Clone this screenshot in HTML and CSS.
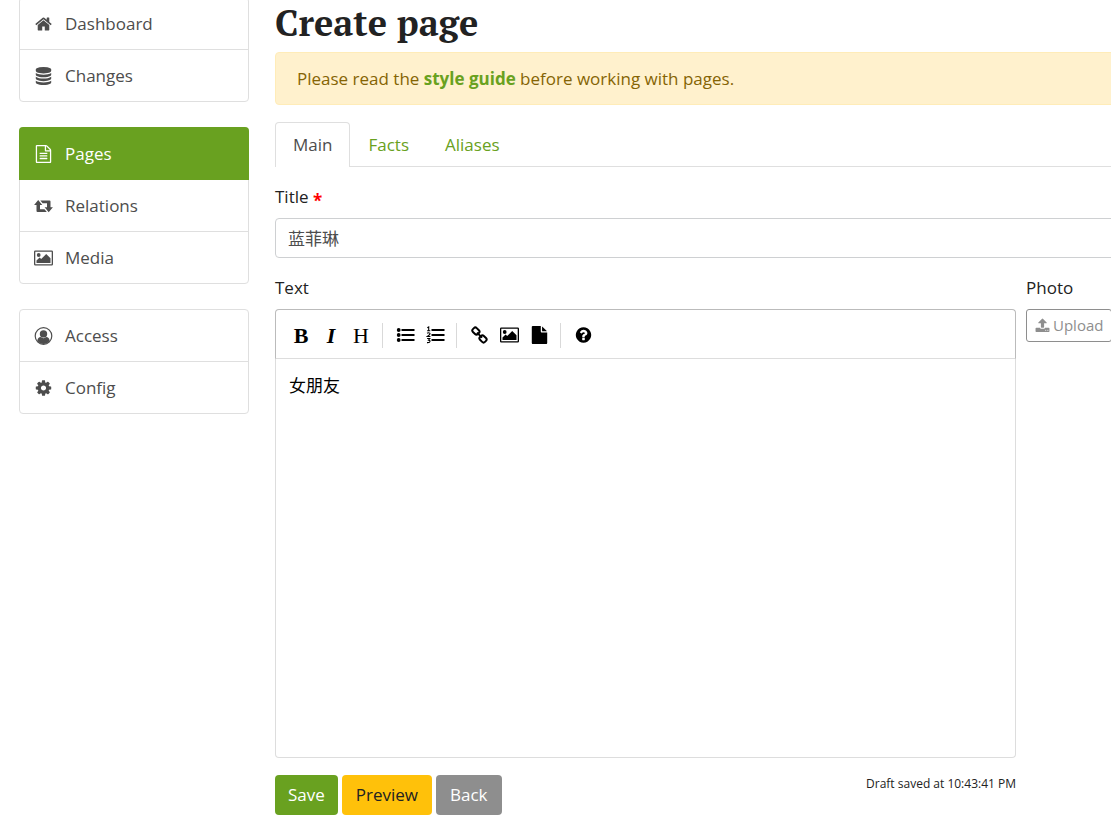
FILE: index.html
```
<!DOCTYPE html>
<html lang="en">
<head>
    <meta charset="UTF-8">
    <meta name="viewport" content="width=device-width, initial-scale=1.0">
    <title>Create page</title>
    <link rel="stylesheet" href="styles.css">
</head>
<body>
    <svg class="sprite" aria-hidden="true">
        <symbol id="image" viewBox="0 0 19 17">
            <path fill-rule="evenodd" d="M1.3 1H17.7Q19 1 19 2.300V14.700Q19 16 17.700 16H1.300Q0 16 0 14.700V2.300Q0 1 1.300 1zM1.300 2.200V14.800H17.700V2.200z"/>
            <circle cx="4.700" cy="5.500" r="1.900"/>
            <path d="M2.500 13.500V11L5.600 8L7.200 9.500L12.200 4.500L16.500 8.800V13.500z"/>
        </symbol>
    </svg>

    <div class="container">
        <nav class="sidebar">
            <div class="list-group">
                <a href="#">
                    <svg class="icon" viewBox="0 0 1792 1792"><path d="M1472 992v480q0 26-19 45t-45 19h-384v-384h-256v384h-384q-26 0-45-19t-19-45v-480q0-1 .5-3t.5-3l575-474 575 474q1 2 1 6zm223-69l-62 74q-8 9-21 11h-3q-13 0-21-7l-692-577-692 577q-12 8-24 7-13-2-21-11l-62-74q-8-10-7-23.5t11-21.500l719-599q32-26 76-26t76 26l244 204v-195q0-14 9-23t23-9h192q14 0 23 9t9 23v408l219 182q10 8 11 21.500t-7 23.500z"/></svg>
                    Dashboard
                </a>
                <a href="#">
                    <svg class="icon" viewBox="0 0 1792 1792"><path d="M896 768q237 0 443-43t325-127v170q0 69-103 128t-280 93.500-385 34.500-385-34.500-280-93.500-103-128v-170q119 84 325 127t443 43zm0 768q237 0 443-43t325-127v170q0 69-103 128t-280 93.500-385 34.500-385-34.500-280-93.500-103-128v-170q119 84 325 127t443 43zm0-384q237 0 443-43t325-127v170q0 69-103 128t-280 93.500-385 34.500-385-34.500-280-93.500-103-128v-170q119 84 325 127t443 43zm0-1152q208 0 385 34.500t280 93.500 103 128v128q0 69-103 128t-280 93.500-385 34.500-385-34.500-280-93.500-103-128v-128q0-69 103-128t280-93.500 385-34.500z"/></svg>
                    Changes
                </a>
            </div>
            <div class="list-group">
                <a href="#" class="active">
                    <svg class="icon" viewBox="0 0 1792 1792"><path d="M1596 380q28 28 48 76t20 88v1152q0 40-28 68t-68 28h-1344q-40 0-68-28t-28-68v-1600q0-40 28-68t68-28h896q40 0 88 20t76 48zm-444-244v376h376q-10-29-22-41l-313-313q-12-12-41-22zm384 1528v-1024h-416q-40 0-68-28t-28-68v-416h-768v1536h1280zm-1024-864q0-14 9-23t23-9h704q14 0 23 9t9 23v64q0 14-9 23t-23 9h-704q-14 0-23-9t-9-23v-64zm736 224q14 0 23 9t9 23v64q0 14-9 23t-23 9h-704q-14 0-23-9t-9-23v-64q0-14 9-23t23-9h704zm0 256q14 0 23 9t9 23v64q0 14-9 23t-23 9h-704q-14 0-23-9t-9-23v-64q0-14 9-23t23-9h704z"/></svg>
                    Pages
                </a>
                <a href="#">
                    <svg class="icon" viewBox="0 0 19 17"><path d="M4.200 2.500L8.300 7.500H6V11.800H10.500L12.800 14.500H3.600Q2.500 14.500 2.500 13.500V7.500H.1zM6.300 3H15.500Q16.500 3 16.500 4V9.700H18.900L14.700 14.800L10.600 9.700H13V5.700H8.600z"/></svg>
                    Relations
                </a>
                <a href="#">
                    <svg class="icon"><use href="#image"/></svg>
                    Media
                </a>
            </div>
            <div class="list-group">
                <a href="#">
                    <svg class="icon" viewBox="0 0 18 18"><circle cx="9" cy="9" r="8.300" fill="none" stroke="currentColor" stroke-width="1.200"/><circle cx="9" cy="6.900" r="3.700"/><path d="M2.800 13.800Q3.400 10.200 6.200 10.100Q9 12.300 11.800 10.100Q14.600 10.200 15.200 13.800Q12.800 17 9 17T2.800 13.800z"/></svg>
                    Access
                </a>
                <a href="#">
                    <svg class="icon" viewBox="0 0 1792 1792"><path d="M1152 896q0-106-75-181t-181-75-181 75-75 181 75 181 181 75 181-75 75-181zm512-109v222q0 12-8 23t-20 13l-185 28q-19 54-39 91 35 50 107 138 10 12 10 25t-9 23q-27 37-99 108t-94 71q-12 0-26-9l-138-108q-44 23-91 38-16 136-29 186-7 28-36 28h-222q-14 0-24.500-8.500t-11.500-21.500l-28-184q-49-16-90-37l-141 107q-10 9-25 9-14 0-25-11-126-114-165-168-7-10-7-23 0-12 8-23 15-21 51-66.500t54-70.500q-27-50-41-99l-183-27q-13-2-21-12.500t-8-23.500v-222q0-12 8-23t19-13l186-28q14-46 39-92-40-57-107-138-10-12-10-24 0-10 9-23 26-36 98.500-107.500t94.500-71.500q13 0 26 10l138 107q44-23 91-38 16-136 29-186 7-28 36-28h222q14 0 24.500 8.500t11.500 21.500l28 184q49 16 90 37l142-107q9-9 24-9 13 0 25 10 129 119 165 170 7 8 7 22 0 12-8 23-15 21-51 66.500t-54 70.500q26 50 41 98l183 28q13 2 21 12.500t8 23.500z"/></svg>
                    Config
                </a>
            </div>
        </nav>

        <main class="content">
            <h1>Create page</h1>
            <div class="alert">Please read the <a href="#">style guide</a> before working with pages.</div>

            <div class="tabs">
                <a href="#" class="active">Main</a>
                <a href="#">Facts</a>
                <a href="#">Aliases</a>
            </div>

            <form>
                <label for="title">Title <span class="required">*</span></label>
                <input type="text" id="title" value="蓝菲琳">

                <div class="row">
                    <div class="text-column">
                        <label for="text">Text</label>
                        <div class="editor">
                            <div class="toolbar">
                                <button type="button" class="bold" title="Bold">B</button>
                                <button type="button" class="italic" title="Italic">I</button>
                                <button type="button" title="Heading">H</button>
                                <i class="separator"></i>
                                <button type="button" title="Bullet list">
                                    <svg class="icon" viewBox="0 0 18 18"><circle cx="2.200" cy="4" r="1.900"/><circle cx="2.200" cy="9" r="1.900"/><circle cx="2.200" cy="14" r="1.900"/><path d="M5 3H18V5H5zM5 8H18V10H5zM5 13H18V15H5z"/></svg>
                                </button>
                                <button type="button" title="Numbered list">
                                    <svg class="icon" viewBox="0 0 18 18"><path d="M5 3H18V5H5zM5 8H18V10H5zM5 13H18V15H5z"/><path fill="none" stroke="currentColor" stroke-width="1.100" d="M.8 1.800L2.200 1V4.500M.6 4.700H3.800M.6 7.300Q2 6.200 3.200 7.100T.8 10.500H3.900M.6 12.500H3.300L2 14.200Q3.600 14.200 3.500 15.500T.5 16.600"/></svg>
                                </button>
                                <i class="separator"></i>
                                <button type="button" title="Link">
                                    <svg class="icon" viewBox="0 0 18 18"><g fill="none" stroke="currentColor" stroke-width="2"><rect x="1.900" y="2.400" width="7" height="5.400" rx="2" transform="rotate(45 5.400 5.100)"/><rect x="9" y="10.200" width="7" height="5.400" rx="2" transform="rotate(45 12.500 12.900)"/><path d="M6.400 6.600L11.600 11.600"/></g></svg>
                                </button>
                                <button type="button" title="Image">
                                    <svg class="icon"><use href="#image"/></svg>
                                </button>
                                <button type="button" title="File">
                                    <svg class="icon" viewBox="0 0 1792 1792"><path d="M1152 512v-472q22 14 36 28l408 408q14 14 28 36h-472zm-128 32q0 40 28 68t68 28h544v1056q0 40-28 68t-68 28h-1344q-40 0-68-28t-28-68v-1600q0-40 28-68t68-28h800v544z"/></svg>
                                </button>
                                <i class="separator"></i>
                                <button type="button" title="Help">
                                    <svg class="icon" viewBox="0 0 1792 1792"><path d="M1024 1376v-192q0-14-9-23t-23-9h-192q-14 0-23 9t-9 23v192q0 14 9 23t23 9h192q14 0 23-9t9-23zm256-672q0-88-55.500-163t-138.500-116-170-41q-243 0-371 213-15 24 8 42l132 100q7 6 19 6 16 0 25-12 53-68 86-92 34-24 86-24 48 0 85.500 26t37.500 59q0 38-20 61t-68 45q-63 28-115.500 86.500t-52.500 125.500v36q0 14 9 23t23 9h192q14 0 23-9t9-23q0-19 21.500-49.500t54.500-49.500q32-18 49-28.500t46-35 44.500-48 28-60.500 12.500-81zm384 192q0 209-103 385.500t-279.500 279.500-385.500 103-385.500-103-279.500-279.500-103-385.500 103-385.500 279.500-279.500 385.500-103 385.500 103 279.500 279.500 103 385.500z"/></svg>
                                </button>
                            </div>
                            <textarea id="text">女朋友</textarea>
                        </div>
                        <div class="actions">
                            <button type="submit" class="btn save">Save</button>
                            <button type="button" class="btn preview">Preview</button>
                            <a href="#" class="btn back">Back</a>
                            <small>Draft saved at 10:43:41 PM</small>
                        </div>
                    </div>
                    <div class="photo-column">
                        <label for="upload">Photo</label>
                        <button type="button" class="upload" id="upload">
                            <svg class="icon" viewBox="0 0 1792 1792"><path d="M1344 1472q0-26-19-45t-45-19-45 19-19 45 19 45 45 19 45-19 19-45zm256 0q0-26-19-45t-45-19-45 19-19 45 19 45 45 19 45-19 19-45zm128-224v320q0 40-28 68t-68 28h-1472q-40 0-68-28t-28-68v-320q0-40 28-68t68-28h427q21 56 70.500 92t110.500 36h256q61 0 110.500-36t70.500-92h427q40 0 68 28t28 68zm-325-648q-17 40-59 40h-256v448q0 26-19 45t-45 19h-256q-26 0-45-19t-19-45v-448h-256q-42 0-59-40-17-39 14-69l448-448q18-19 45-19t45 19l448 448q31 30 14 69z"/></svg>
                            Upload
                        </button>
                    </div>
                </div>
            </form>
        </main>
    </div>
</body>
</html>
```
FILE: styles.css
```
* {
    box-sizing: border-box;
}
body {
    margin: 0;
    font-family: 'Open Sans', 'Noto Sans CJK SC', sans-serif;
    font-size: 17px;
    line-height: 25px;
    color: #222;
    background-color: #fff;
    overflow-x: hidden;
}
a {
    color: #69a120;
    text-decoration: none;
}
button, input, textarea {
    font: inherit;
}
.sprite {
    position: absolute;
    width: 0;
    height: 0;
}
.icon {
    width: 19px;
    height: 18px;
    fill: currentColor;
    flex: none;
}
.container {
    display: flex;
    gap: 26px;
    padding-left: 19px;
}

/* Sidebar */
.sidebar {
    width: 230px;
    flex: none;
    margin-top: -3px;
}
.list-group {
    margin-bottom: 25px;
    border: 1px solid #dfdfdf;
    border-radius: 4px;
}
.list-group a {
    display: flex;
    align-items: center;
    gap: 12px;
    padding: 13px 14px;
    color: #4d4d4d;
}
.list-group a + a {
    border-top: 1px solid #dfdfdf;
}
.list-group a.active {
    margin: -1px;
    padding: 14px 15px;
    border-radius: 4px 4px 0 0;
    background-color: #69a120;
    color: #fff;
}
.list-group a.active + a {
    border-top-color: #69a120;
}

/* Content */
.content {
    flex: 1;
    min-width: 0;
    margin-right: -160px;
}
h1 {
    margin: 0 0 6px;
    font-family: 'PT Serif', 'Liberation Serif', serif;
    font-size: 36px;
    line-height: 46px;
    font-weight: bold;
}
.alert {
    padding: 13px 21px;
    border: 1px solid #ffecb8;
    border-radius: 4px;
    background-color: #fff1cd;
    color: #856404;
}
.alert a {
    font-weight: bold;
}
.tabs {
    display: flex;
    margin: 17px 0;
    border-bottom: 1px solid #dfdfdf;
}
.tabs a {
    padding: 9px 17px;
    border: 1px solid transparent;
    border-bottom: 0;
    border-radius: 4px 4px 0 0;
}
.tabs a.active {
    margin-bottom: -1px;
    border-color: #dfdfdf;
    background-color: #fff;
    color: #4d4d4d;
}
label {
    display: block;
    margin-bottom: 9px;
}
.required {
    color: #f00;
    font-weight: bold;
    line-height: 1;
    vertical-align: sub;
}
input[type="text"] {
    display: block;
    width: 100%;
    height: 40px;
    margin-bottom: 17px;
    padding: 5px 12px 7px;
    border: 1px solid #ced0d2;
    border-radius: 4px;
    color: #4d4d4d;
}
.row {
    display: grid;
    grid-template-columns: minmax(0, 1fr) 245px;
    gap: 10px;
}

/* Editor */
.toolbar {
    display: flex;
    align-items: center;
    height: 50px;
    padding: 2px 10px 0;
    border: 1px solid #bbb;
    border-bottom-color: #ddd;
    border-radius: 4px 4px 0 0;
}
.toolbar button {
    display: flex;
    align-items: center;
    justify-content: center;
    width: 30px;
    height: 30px;
    padding: 0;
    border: 0;
    background: none;
    color: #000;
    font-family: 'Liberation Serif', serif;
    font-size: 22px;
    cursor: pointer;
}
.toolbar .bold {
    font-weight: bold;
}
.toolbar .italic {
    font-weight: bold;
    font-style: italic;
}
.separator {
    width: 1px;
    height: 25px;
    margin: 0 7px 0 6px;
    background-color: #d9d9d9;
}
textarea {
    display: block;
    width: 100%;
    height: 399px;
    padding: 14px 13px;
    border: 1px solid #ddd;
    border-top: 0;
    border-radius: 0 0 4px 4px;
    color: #000;
    resize: none;
}
.actions {
    display: flex;
    align-items: flex-start;
    gap: 4px;
    margin-top: 17px;
}
.actions small {
    margin-left: auto;
    font-size: 12px;
    line-height: 18px;
}
.btn {
    height: 40px;
    padding: 7px 13px 8px;
    border: 0;
    border-radius: 4px;
    color: #fff;
    cursor: pointer;
}
.save {
    background-color: #69a120;
}
.preview {
    padding: 7px 14px 8px;
    background-color: #ffc10a;
    color: #222;
}
.back {
    padding: 7px 14px 8px;
    background-color: #8e8e8e;
}
.upload {
    display: flex;
    align-items: center;
    gap: 3px;
    height: 33px;
    padding: 0 8px;
    border: 1px solid #8e8e8e;
    border-radius: 3px;
    background: none;
    color: #8e8e8e;
    font-size: 15px;
    cursor: pointer;
}
.upload .icon {
    width: 15px;
    height: 15px;
}
```
